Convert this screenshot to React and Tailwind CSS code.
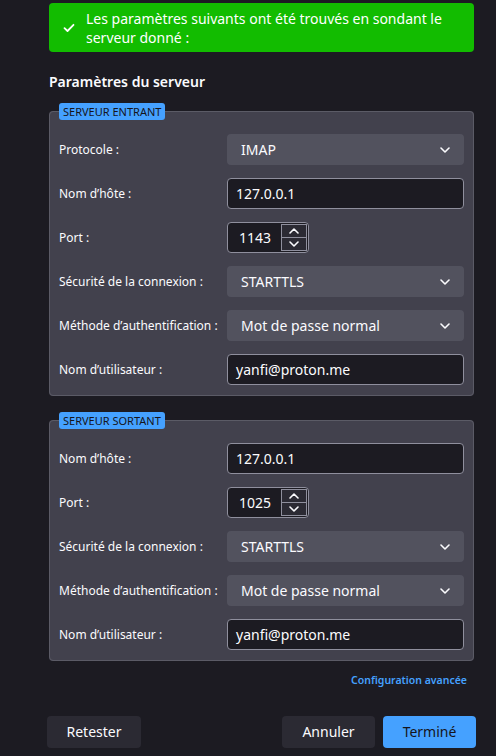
const font = { fontFamily: '"Noto Sans", "Open Sans", sans-serif' };

function Chevron({ up = false, className = "" }) {
  return (
    <svg width="10" height="6" viewBox="0 0 10 6" className={className} fill="none">
      <polyline
        points={up ? "1,5 5,1 9,5" : "1,1 5,5 9,1"}
        stroke="#fbfbfe"
        strokeWidth="1.6"
        strokeLinecap="round"
        strokeLinejoin="round"
      />
    </svg>
  );
}

function Select({ value }) {
  return (
    <div className="h-[31px] rounded-[4px] bg-[#52525e] flex items-center justify-between pl-[14px] pr-[14px]">
      <span className="text-[14px] text-[#fbfbfe]">{value}</span>
      <Chevron />
    </div>
  );
}

function Input({ value }) {
  return (
    <div className="h-[31px] rounded-[4px] bg-[#1c1b22] border border-[#8f8f9d] flex items-center pl-[8px]">
      <span className="text-[14px] text-[#fbfbfe]">{value}</span>
    </div>
  );
}

function PortInput({ value }) {
  return (
    <div className="h-[31px] w-[82px] rounded-[4px] bg-[#1c1b22] border border-[#8f8f9d] flex">
      <div className="flex-1 flex items-center justify-center pl-[2px]">
        <span className="text-[14px] text-[#fbfbfe]">{value}</span>
      </div>
      <div className="w-[28px] flex flex-col p-[1px]">
        <div className="flex-1 border border-[#8f8f9d] bg-[#2b2a33] flex items-center justify-center">
          <Chevron up />
        </div>
        <div className="flex-1 border border-t-0 border-[#8f8f9d] bg-[#2b2a33] flex items-center justify-center">
          <Chevron />
        </div>
      </div>
    </div>
  );
}

function Row({ label, children }) {
  return (
    <div className="grid grid-cols-[168px_1fr] items-center">
      <span className="text-[12px] text-[#fbfbfe]">{label}</span>
      <div>{children}</div>
    </div>
  );
}

function ServerBox({ title, children }) {
  return (
    <fieldset className="border border-[#5b5b66] rounded-[4px] bg-[#42414d] px-[9px] pt-[14px] pb-[10px]">
      <legend className="bg-[#45a1ff] rounded-[3px] px-[4px] h-[17px] leading-[17px] text-[11px] text-[#15141a] uppercase">
        {title}
      </legend>
      <div className="flex flex-col gap-[13px]">{children}</div>
    </fieldset>
  );
}

export default function App() {
  return (
    <div className="min-h-[756px] w-[496px] bg-[#1c1b22] text-[#fbfbfe]" style={font}>
      <div className="pt-[3px] pl-[49px] pr-[22px]">
        <div className="bg-[#12bc00] rounded-[4px] h-[49px] flex items-center">
          <div className="w-[37px] flex justify-center pl-[3px]">
            <svg width="12" height="10" viewBox="0 0 12 10" fill="none">
              <polyline points="1.5,5.2 4.5,8 10.5,1.8" stroke="#fff" strokeWidth="1.8" strokeLinecap="round" strokeLinejoin="round" />
            </svg>
          </div>
          <p className="text-[14px] leading-[19px] text-white">
            Les paramètres suivants ont été trouvés en sondant le
            <br />
            serveur donné :
          </p>
        </div>

        <h2 className="mt-[19px] text-[14px] font-semibold">Paramètres du serveur</h2>

        <div className="mt-[11px]">
          <ServerBox title="Serveur entrant">
            <Row label="Protocole :"><Select value="IMAP" /></Row>
            <Row label="Nom d’hôte :"><Input value="127.0.0.1" /></Row>
            <Row label="Port :"><PortInput value="1143" /></Row>
            <Row label="Sécurité de la connexion :"><Select value="STARTTLS" /></Row>
            <Row label="Méthode d’authentification :"><Select value="Mot de passe normal" /></Row>
            <Row label="Nom d’utilisateur :"><Input value="yanfi@proton.me" /></Row>
          </ServerBox>
        </div>

        <div className="mt-[16px]">
          <ServerBox title="Serveur sortant">
            <Row label="Nom d’hôte :"><Input value="127.0.0.1" /></Row>
            <Row label="Port :"><PortInput value="1025" /></Row>
            <Row label="Sécurité de la connexion :"><Select value="STARTTLS" /></Row>
            <Row label="Méthode d’authentification :"><Select value="Mot de passe normal" /></Row>
            <Row label="Nom d’utilisateur :"><Input value="yanfi@proton.me" /></Row>
          </ServerBox>
        </div>

        <div className="flex justify-end mt-[12px] pr-[7px]">
          <span className="text-[10.5px] font-semibold text-[#45a1ff]">Configuration avancée</span>
        </div>
      </div>

      <div className="flex items-center justify-between pl-[47px] pr-[20px] mt-[27px]">
        <button className="h-[32px] w-[94px] rounded-[4px] bg-[#2b2a33] text-[14px] text-[#fbfbfe]">Retester</button>
        <div className="flex gap-[8px]">
          <button className="h-[32px] w-[93px] rounded-[4px] bg-[#2b2a33] text-[14px] text-[#fbfbfe]">Annuler</button>
          <button className="h-[32px] w-[93px] rounded-[4px] bg-[#45a1ff] text-[14px] text-[#15141a]">Terminé</button>
        </div>
      </div>
    </div>
  );
}
